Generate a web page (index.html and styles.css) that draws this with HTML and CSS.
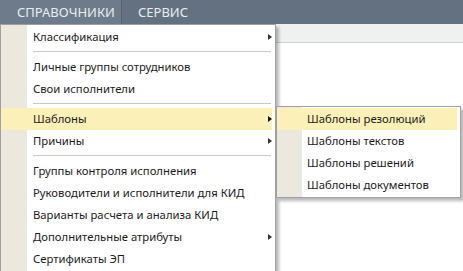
FILE: index.html
```html
<!DOCTYPE html>
<html lang="ru">
<head>
    <meta charset="UTF-8">
    <title>Справочники</title>
    <link rel="stylesheet" href="styles.css">
</head>
<body>
    <div class="top-bar">
        <div class="tab tab-active">СПРАВОЧНИКИ</div>
        <div class="tab">СЕРВИС</div>
    </div>
    <div class="toolbar-strip"></div>
    <div class="workspace"></div>

    <div class="menu main-menu">
        <div class="menu-item has-sub">Классификация</div>
        <div class="menu-sep"></div>
        <div class="menu-item">Личные группы сотрудников</div>
        <div class="menu-item">Свои исполнители</div>
        <div class="menu-sep"></div>
        <div class="menu-item has-sub active">Шаблоны</div>
        <div class="menu-item has-sub">Причины</div>
        <div class="menu-sep"></div>
        <div class="menu-item">Группы контроля исполнения</div>
        <div class="menu-item">Руководители и исполнители для КИД</div>
        <div class="menu-item">Варианты расчета и анализа КИД</div>
        <div class="menu-item has-sub">Дополнительные атрибуты</div>
        <div class="menu-item">Сертификаты ЭП</div>
    </div>

    <div class="menu sub-menu">
        <div class="menu-item active">Шаблоны резолюций</div>
        <div class="menu-item">Шаблоны текстов</div>
        <div class="menu-item">Шаблоны решений</div>
        <div class="menu-item">Шаблоны документов</div>
    </div>
</body>
</html>
```

FILE: styles.css
```css
* {
    margin: 0;
    padding: 0;
    box-sizing: border-box;
}

body {
    font-family: 'Noto Sans', 'Open Sans', Arial, sans-serif;
    background: white;
    width: 463px;
    height: 271px;
    overflow: hidden;
    position: relative;
}

.top-bar {
    display: flex;
    height: 24px;
    background: #637181;
}

.tab {
    color: #e9edf1;
    font-size: 13px;
    line-height: 24px;
    padding: 0 16px;
}

.tab-active {
    background: #6d7b8a;
    border-right: 1px solid #56626f;
    width: 122px;
    padding-left: 17px;
}

.toolbar-strip {
    height: 19px;
    background: #f0f0f0;
    border-bottom: 1px solid #c7d2dc;
}

.menu {
    position: absolute;
    background: white;
    border: 1px solid #a0a0a0;
    padding: 1px 0;
    box-shadow: 3px 3px 3px rgba(0,0,0,0.28);
    color: #1b1b1b;
    font-size: 11.3px;
}

.main-menu {
    top: 24px;
    left: 0;
    width: 276px;
    padding-bottom: 20px;
    background: linear-gradient(to right, #ece8de 26px, white 26px);
}

.sub-menu {
    top: 106px;
    left: 276px;
    width: 185px;
    background: linear-gradient(to right, #ece8de 25px, white 25px);
}

.menu-item {
    height: 22px;
    line-height: 22px;
    padding-left: 32px;
    position: relative;
}

.sub-menu .menu-item {
    padding-left: 30px;
}

.menu-item.active {
    background: #fcf0b9;
    margin-right: 3px;
}

.has-sub::after {
    content: '';
    position: absolute;
    right: 3px;
    top: 8px;
    border-left: 4px solid #333;
    border-top: 3.5px solid transparent;
    border-bottom: 3.5px solid transparent;
}

.has-sub.active::after {
    right: 0;
    border-left-color: #111;
}

.menu-sep {
    height: 8px;
    margin: 0 4px 0 32px;
    background: linear-gradient(#c8c8c8, #c8c8c8) no-repeat 0 3px / 100% 1px;
}
```
